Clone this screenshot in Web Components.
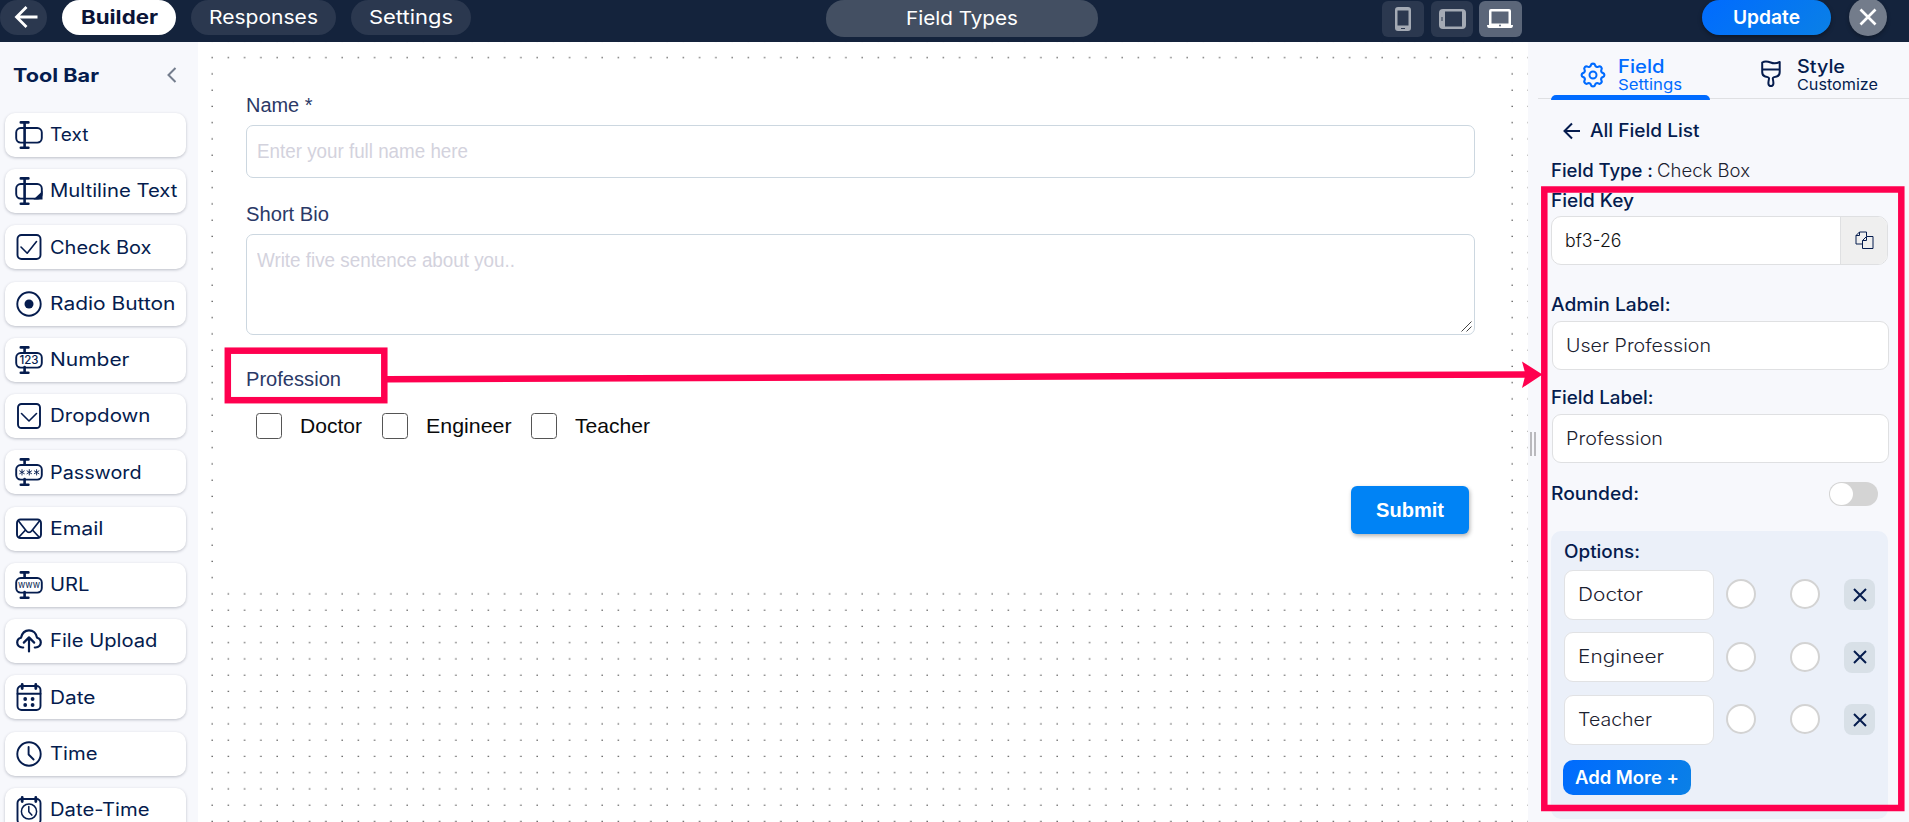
<!DOCTYPE html>
<html lang="en"><head><meta charset="utf-8"><title>Form Builder</title>
<style>
html,body{margin:0;height:822px;overflow:hidden;background:#fff}
body{font-family:Inter,"Open Sans",sans-serif;color:#051c4e}
</style></head><body>
<form-builder-app></form-builder-app>
<script>
const define=(name,html,after)=>customElements.define(name,class extends HTMLElement{
  connectedCallback(){
    if(this.shadowRoot)return;
    const t=document.createElement('template');
    t.innerHTML=typeof html==='function'?html(this):html;
    this.attachShadow({mode:'open'}).append(t.content.cloneNode(true));
    if(after)after(this);
  }
});

/* Label whose glyphs are stretched to an exact width */
define('fit-text',e=>`<style>
:host{display:block;white-space:nowrap;line-height:20px;height:20px;font-size:18px;width:${e.getAttribute('w')}px;flex:none}
span{display:inline-block;transform-origin:0 50%}</style><span><slot></slot></span>`,e=>{
  const s=e.shadowRoot.querySelector('span'),w=s.getBoundingClientRect().width;
  if(w)s.style.transform=`scaleX(${(+e.getAttribute('w')/w).toFixed(4)})`;
});

const beam='<path d="M9.6 2.6v24.8M5.8 2.4h7.6M5.8 27.8h7.6" stroke-width="2.6"/>';
const beamCut='<path d="M9.6 2.6v5M9.6 22v5.4M5.8 2.4h7.6M5.8 27.8h7.6" stroke-width="2.6"/>';
const body='<rect x="1.2" y="8" width="25.6" height="14.6" rx="4.5"/>';
const ICONS={
 text:body+beam,
 multi:body+beam+'<path d="M27.5 15v8.6h-9z" fill="currentColor" stroke="none"/>',
 check:'<rect x="2.5" y="3" width="23" height="24" rx="4"/><path d="M6 15l6.2 6.2L21.5 9.6" stroke-width="1.6"/>',
 radio:'<circle cx="14" cy="15" r="11.7"/><circle cx="14" cy="15" r="4.5" fill="currentColor" stroke="none"/>',
 number:body+beamCut+'<text x="14" y="19.300" font-size="11.500" textLength="19" font-weight="500" text-anchor="middle" fill="currentColor" stroke="none">123</text>',
 drop:'<rect x="3" y="3" width="22" height="24" rx="3.5"/><path d="M6.5 12.5L14 20l7.500-7.500" stroke-width="1.6"/>',
 pass:body+beamCut+'<path d="M7 12.600v5.400M4.700 13.900l4.600 2.800M9.300 13.900l-4.600 2.800M14.300 12.600v5.400M12 13.900l4.600 2.800M16.600 13.900l-4.600 2.800M21.600 12.600v5.400M19.300 13.900l4.600 2.800M23.900 13.900l-4.600 2.800" stroke-width=".9"/>',
 mail:'<rect x="2" y="5.500" width="24" height="18.500" rx="3.500"/><path d="M3.500 7l7.500 9.500c2 2.600 4 2.600 6 0L24.500 7M4 23l6.500-7M24 23l-6.500-7" stroke-width="1.700"/>',
 url:body+beamCut+'<text x="14" y="18.300" font-size="10" textLength="22" lengthAdjust="spacingAndGlyphs" font-weight="400" text-anchor="middle" fill="currentColor" stroke="none">www</text>',
 upload:'<path d="M8.200 21.500H7.400C4.400 21.300 2.200 19.200 2.200 16.500c0-2.300 1.500-4.200 3.800-4.800C7 7.300 10 4.300 14 4.300s7.300 3 8 7.400c2.300.6 3.800 2.500 3.800 4.800 0 2.700-2.200 4.800-5.200 5h-.8M14 25.500V12M8.800 16.600L14 11.400l5.200 5.200" stroke-width="2.200"/>',
 date:'<rect x="2.500" y="4" width="23" height="24" rx="4"/><path d="M2.500 11.800h23"/><path d="M7.200 2.500v4M20.800 2.500v4" stroke-width="2.800"/><g fill="currentColor" stroke="none"><circle cx="10.200" cy="17" r="1.900"/><circle cx="17.600" cy="17" r="1.900"/><circle cx="10.200" cy="23" r="1.900"/><circle cx="17.600" cy="23" r="1.900"/></g>',
 time:'<circle cx="14" cy="15" r="11.700"/><path d="M13.600 8v7.500l5 5"/>',
 datetime:'<rect x="2.500" y="4" width="23" height="25" rx="4"/><path d="M7.200 2.500v4M20.800 2.500v4" stroke-width="2.800"/><circle cx="14" cy="16.500" r="7.600" stroke-width="1.500"/><path d="M13.800 11.500v5.300l3 3.300" stroke-width="1.500"/>'
};
define('tool-button',e=>`<style>
:host{display:flex;align-items:center;gap:7px;box-sizing:border-box;height:44px;padding-left:10px;background:#fff;border-radius:10px;box-shadow:0 1px 3px rgba(40,45,70,.28)}
svg{width:28px;height:30px;flex:none;fill:none;stroke:#051c4e;color:#051c4e;stroke-width:1.9;stroke-linecap:round;stroke-linejoin:round;font-family:Inter,sans-serif}
fit-text{padding-top:.5px}
</style><svg viewBox="0 0 28 30">${ICONS[e.getAttribute('icon')]}</svg><fit-text w="${e.getAttribute('w')-1.5}">${e.getAttribute('label')}</fit-text>`);

define('tool-bar',()=>`<style>
:host{display:block;background:#f7f8fc;overflow:hidden;box-sizing:border-box;padding:0 12px 0 5px}
header{display:flex;align-items:center;justify-content:space-between;height:70.800px;padding:0 9px 5px 7.500px;box-sizing:border-box}
fit-text{font-weight:700;font-size:18.500px}
svg{width:11px;height:16px;fill:none;stroke:#747d8d;stroke-width:2}
nav{display:grid;gap:12.250px}
</style><header><fit-text w="86">Tool Bar</fit-text><svg viewBox="0 0 11 16"><path d="M9.500 1L2.500 8l7 7"/></svg></header><nav>${
[['text','Text',40],['multi','Multiline Text',129],['check','Check Box',103],['radio','Radio Button',127],['number','Number',81],['drop','Dropdown',102],['pass','Password',93],['mail','Email',55],['url','URL',41],['upload','File Upload',109],['date','Date',47],['time','Time',49],['datetime','Date-Time',101]]
.map(([i,l,w])=>`<tool-button icon="${i}" label="${l}" w="${w}"></tool-button>`).join('')}</nav>`);

define('top-bar',`<style>
:host{display:flex;position:relative;height:42px;background:#14233c;color:#fff;align-items:flex-start}
div{display:flex;box-sizing:border-box;align-items:center;justify-content:center;height:35px;background:#2b384f;border-radius:18px;flex:none;padding-top:1px}
fit-text{font-size:19px}
.back{width:47px;padding:0 0 1px 5px}.b{width:114px;margin-left:15px;background:#fff;color:#0b1437;font-weight:700}
.r{width:145px;margin-left:15px}.s{width:120px;margin-left:15px}
.f{width:272px;height:37px;margin-left:355px;padding:0;background:#434f62}
.d{width:42px;height:36px;margin:1px 0 0 7px;border-radius:6px;padding:0 0 1px}
.d1{margin-left:284px}.on{width:43px;margin-left:6px;padding-right:1px;background:#5b6679}
.u{width:129px;margin-left:180px;background:linear-gradient(135deg,#006bff,#0a80e6);font-weight:600;box-shadow:0 2px 4px rgba(0,0,0,.35)}
.c{width:38px;height:38px;margin:-2px 0 0 18px;border-radius:50%;background:#737c8b;padding:0;box-shadow:0 2px 4px rgba(0,0,0,.3)}
svg{display:block}
</style>
<div class="back"><svg width="24" height="24" viewBox="0 0 24 24" fill="none" stroke="#fff" stroke-width="2.800"><path d="M23.500 12H2.500M12.500 2L2.500 12l10 10"/></svg></div>
<div class="b"><fit-text w="77">Builder</fit-text></div>
<div class="r"><fit-text w="109">Responses</fit-text></div>
<div class="s"><fit-text w="84">Settings</fit-text></div>
<div class="f"><fit-text w="112">Field Types</fit-text></div>
<div class="d d1"><svg width="16" height="24"><path fill="#a4aab4" fill-rule="evenodd" d="M3 0h10a3 3 0 013 3v18a3 3 0 01-3 3H3a3 3 0 01-3-3V3a3 3 0 013-3zM2.500 3.500v15h11v-15zM6 21v1h4v-1z"/></svg></div>
<div class="d"><svg width="27" height="20"><path fill="#a4aab4" fill-rule="evenodd" d="M4 0h19a4 4 0 014 4v12a4 4 0 01-4 4H4a4 4 0 01-4-4V4a4 4 0 014-4zM6 2.500v15h17v-15zM2.500 8v4h1V8z"/></svg></div>
<div class="d on"><svg width="26" height="19"><path fill="#fff" fill-rule="evenodd" d="M4 0h18a2 2 0 012 2v14H2V2a2 2 0 012-2zM4.500 2.500v12h17v-12z"/><path fill="#fff" d="M0 16h26c0 2-.700 3-2 3H2c-1.300 0-2-1-2-3z"/><circle cx="13" cy="16.500" r="1" fill="#5b6679"/></svg></div>
<div class="u"><fit-text w="67">Update</fit-text></div>
<div class="c"><svg width="18" height="18" stroke="#fff" stroke-width="2.700"><path d="M1.500 1.500l15 15M16.500 1.500l-15 15"/></svg></div>`);

define('check-option',e=>`<style>
:host{display:flex;align-items:center;height:26px;gap:18px;color:#0a0a0a}
i{width:26px;height:26px;box-sizing:border-box;border:1.300px solid #555;border-radius:3.500px;background:#fff}
fit-text{font:21px/24px "Liberation Sans",Arial,sans-serif;height:24px}
</style><i></i><fit-text w="${e.getAttribute('w')}"><slot></slot></fit-text>`);

define('form-canvas',`<style>
:host{display:block;position:relative;overflow:hidden;background:#fff;font:20px/24px "Liberation Sans",Arial,sans-serif;color:#2b3967}
.dots{position:absolute;left:0;top:0}
main{position:relative;background:#fff;margin:18px 0 0 16px;width:1296px;height:531px;box-sizing:border-box;padding:33px 35px 0 32px}
fit-text{line-height:24px;height:24px;font-size:20px}
.in{box-sizing:border-box;border:1px solid #ccd7e0;border-radius:7px;background:#fff;color:#d3d2dd;position:relative}
.in fit-text{font-size:19.500px}
.one{height:53px;margin:8px 0 24px;padding:13px 0 0 10px}
.two{height:101px;margin:8px 0 32px;padding:13px 0 0 10px}
.two svg{position:absolute;right:2px;bottom:2px}
.opts{display:flex;gap:19.700px;padding-left:10px;margin-top:21.500px}
.btn{display:flex;align-items:center;justify-content:center;width:118px;height:48px;margin:47.500px 6.500px 0 auto;box-sizing:border-box;background:#0083f5;color:#fff;border-radius:6px;font-weight:700;box-shadow:1px 2px 4px rgba(0,0,0,.3)}
</style><svg class="dots" width="1331" height="780"><defs><pattern id="p" x="6.300" y="7.700" width="16.250" height="16.250" patternUnits="userSpaceOnUse"><rect x="7.200" y="7.400" width="1.300" height="1.100" fill="#333"/></pattern></defs><rect x="6" y="0" width="1325" height="780" fill="url(#p)"/></svg>
<main><fit-text w="66.500">Name *</fit-text><div class="in one"><fit-text w="211">Enter your full name here</fit-text></div>
<fit-text w="83">Short Bio</fit-text><div class="in two"><fit-text w="258">Write five sentence about you..</fit-text><svg width="11" height="11" stroke="#444" stroke-width="1"><path d="M.5 10.500l10-10M5.500 10.500l5-5"/></svg></div>
<fit-text w="95">Profession</fit-text>
<div class="opts"><check-option w="62">Doctor</check-option><check-option w="85.500">Engineer</check-option><check-option w="75">Teacher</check-option></div>
<div class="btn"><fit-text w="68">Submit</fit-text></div></main>`);

define('option-row',e=>`<style>
:host{display:flex;height:50px;align-items:center}
.v{width:150px;height:50px;box-sizing:border-box;border:1px solid #e1e2e4;border-radius:9px;background:#fff;padding:14px 0 0 13px;font-weight:300;color:#1b2130}
.o{box-sizing:border-box;width:30px;height:30px;border:2px solid #d3d3d3;border-radius:50%;background:#fff;margin:-1px 0 0 12px}
.o+.o{margin-left:34px}
.x{width:31px;height:31px;border-radius:8px;background:#d8e0e7;margin-left:24px;display:grid;place-items:center}
svg{fill:none;stroke:#051c4e;stroke-width:2}
</style><div class="v"><fit-text w="${e.getAttribute('w')-1}"><slot></slot></fit-text></div><div class="o"></div><div class="o"></div><div class="x"><svg width="14" height="14"><path d="M1 1l12 12M13 1L1 13"/></svg></div>`);

define('settings-panel',`<style>
:host{display:block;position:relative;background:#f7f8fc;box-sizing:border-box;padding-left:23px;overflow:hidden;color:#051c4e;font-weight:550}
.tabs{display:grid;grid-template-columns:159px 1fr;height:58px;margin-left:-13px;padding-left:13px;background:linear-gradient(#dfe0e3,#dfe0e3) 0 56px/100% 1px no-repeat}
.tab{display:flex;box-sizing:border-box;padding:16px 0 0 28px}
.tab svg{flex:none;fill:none;stroke:currentColor;stroke-width:2;stroke-linejoin:round;margin-top:2.500px}
.tab section{margin:0 0 0 14px}
.tab+.tab{padding-left:50.500px}.tab+.tab section{margin-left:16.500px}.tab+.tab svg{margin-top:1.500px}
.tab fit-text{height:18px;line-height:18px}.tab fit-text+fit-text{font-weight:400;font-size:15px;height:16px;line-height:17px}
.on{color:#006bff;position:relative}
.on::after{content:"";position:absolute;left:0;right:0;bottom:0;height:5px;background:#006bff;border-radius:5px 5px 0 0}
.back{display:flex;align-items:center;gap:10.500px;margin:21px 0 20px 11.500px}
.row{display:flex;gap:4px;margin-bottom:10px}
.light{font-weight:300;color:#1b2130}
.key{display:flex;box-sizing:border-box;width:337px;height:49px;border:1px solid #dfe0e2;border-radius:10px;background:#fff;overflow:hidden;margin:5px 0 29.500px}
.key fit-text{margin:14px 0 0 12.500px;color:#111;font-weight:350}
.key div{margin-left:auto;width:46px;background:#efefef;border-left:1px solid #dfe0e2;display:grid;place-items:center}
.in{box-sizing:border-box;margin:6px 0 0 1px;width:337px;height:49px;border:1px solid #dfe0e2;border-radius:9px;background:#fff;padding:14px 0 0 13px}
.in+fit-text{margin-top:18px}
.round{display:flex;width:327px;justify-content:space-between;align-items:center;margin-top:19px;height:24px}
.sw{width:49px;height:24px;box-sizing:border-box;background:#d4d4d4;border-radius:12px;padding:1px}
.sw i{display:block;width:23px;height:22px;background:#fff;border-radius:50%}
.box{width:337px;height:288px;box-sizing:border-box;background:#ebf0f9;border-radius:10px;margin-top:25px;padding:11px 0 0 13px}
.rows{display:grid;gap:12.500px;margin-top:8px}
.add{display:flex;box-sizing:border-box;align-items:center;justify-content:center;padding-top:1px;width:128px;height:35px;margin:15px 0 0 -1px;border-radius:10px;background:linear-gradient(120deg,#006bff,#0a80e6);color:#fff;font-weight:600}
.grip{position:absolute;left:2px;top:390px;width:2px;height:24px;border-left:2px solid #b9b9bd;border-right:2px solid #b9b9bd}
</style><div class="grip"></div>
<div class="tabs"><div class="tab on"><svg width="28" height="28" viewBox="0 0 24 24" style="stroke-width:1.700"><path d="M10.300 4.300c.4-1.700 3-1.700 3.400 0a1.720 1.720 0 002.600 1.100c1.500-1 3.300.8 2.400 2.400a1.720 1.720 0 001 2.500c1.800.5 1.800 3 0 3.400a1.720 1.720 0 00-1 2.600c.9 1.500-.9 3.300-2.400 2.400a1.720 1.720 0 00-2.600 1c-.4 1.800-3 1.800-3.400 0a1.720 1.720 0 00-2.600-1c-1.500.9-3.300-.9-2.400-2.400a1.720 1.720 0 00-1-2.600c-1.800-.4-1.800-2.900 0-3.400a1.720 1.720 0 001-2.500c-.9-1.600.9-3.400 2.400-2.400 1 .6 2.300.1 2.600-1.100z" transform="translate(12 12) scale(1.080) translate(-12 -12)"/><circle cx="12" cy="12" r="3"/></svg><section style="margin-left:11px"><fit-text w="46.500">Field</fit-text><fit-text w="64">Settings</fit-text></section></div>
<div class="tab"><svg width="20" height="28" viewBox="0 0 20 28"><path d="M1.200 2.500c3-2 5.500-1.200 8.500 0s6 1 9-.5V12c0 2.500-1 4-3 4.500l-2.500.6c-1.300.3-1.600 1-1.300 2.300.8 3.500 1 6.600-2 6.600s-2.800-3.100-2-6.600c.3-1.300 0-2-1.300-2.300l-2.400-.6c-2-.5-3-2-3-4.500zM1.200 9.500h17.500"/></svg><section><fit-text w="48">Style</fit-text><fit-text w="81">Customize</fit-text></section></div></div>
<div class="back"><svg width="17" height="20" fill="none" stroke="#051c4e" stroke-width="2"><path d="M17 10H1.500M9 2.500L1.500 10 9 17.500"/></svg><fit-text w="109.500">All Field List</fit-text></div>
<div class="row"><fit-text w="102">Field Type :</fit-text><fit-text class="light" w="93">Check Box</fit-text></div>
<fit-text w="83">Field Key</fit-text>
<div class="key"><fit-text w="56.500">bf3-26</fit-text><div><svg width="19" height="19" fill="#efefef" stroke="#051c4e" stroke-width="1"><path d="M11.500 5V1h-7L1 4.500V13h6.500M1 4.500h3.500V1"/><path d="M11.500 5.500h6.500v12H7.500v-8zM7.500 9.500h4v-4"/></svg></div></div>
<fit-text w="119.500">Admin Label:</fit-text><div class="in light"><fit-text w="145">User Profession</fit-text></div>
<fit-text w="102.500">Field Label:</fit-text><div class="in light"><fit-text w="97">Profession</fit-text></div>
<div class="round"><fit-text w="88">Rounded:</fit-text><div class="sw"><i></i></div></div>
<div class="box"><fit-text w="76">Options:</fit-text><div class="rows"><option-row w="66">Doctor</option-row><option-row w="87">Engineer</option-row><option-row w="75">Teacher</option-row></div><div class="add"><fit-text w="104">Add More +</fit-text></div></div>`);

define('callout-marks',`<style>:host{display:block;position:absolute;left:0;top:0;pointer-events:none}svg{display:block}</style>
<svg width="1909" height="822" fill="none" stroke="#ff004f" stroke-width="6.500"><rect x="227.800" y="350.700" width="156.500" height="49.500"/><rect x="1544.300" y="189.500" width="357" height="618.500"/><path d="M387 379.300L1528 374.500"/><path d="M1522 361.500l20.500 13-20.500 13.500 3.500-13.500z" fill="#ff004f" stroke="none"/></svg>`);

define('form-builder-app',`<style>
:host{display:grid;position:relative;width:1909px;height:822px;overflow:hidden;grid-template:42px 780px/198px 1330px 381px}
top-bar{grid-column:1/-1;min-width:0}
</style><top-bar></top-bar><tool-bar></tool-bar><form-canvas></form-canvas><settings-panel></settings-panel><callout-marks></callout-marks>`);
</script></body></html>
